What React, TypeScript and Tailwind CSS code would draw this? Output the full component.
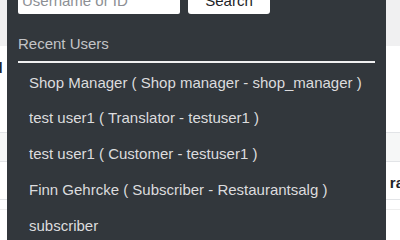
export default function App() {
  const users = [
    "Shop Manager ( Shop manager - shop_manager )",
    "test user1 ( Translator - testuser1 )",
    "test user1 ( Customer - testuser1 )",
    "Finn Gehrcke ( Subscriber - Restaurantsalg )",
    "subscriber",
  ];
  return (
    <div
      className="relative w-[400px] h-[240px] overflow-hidden bg-white"
      style={{ fontFamily: '"Liberation Sans", Arial, sans-serif' }}
    >
      {/* background page */}
      <div className="flex flex-col">
        <div className="h-[46px] bg-[#f0f0f1]" />
        <div className="h-[86px] bg-white relative">
          <span className="absolute left-[-6px] top-[12px] text-[14px] font-bold text-[#1d2327]">d</span>
        </div>
        <div className="h-[30px] bg-[#f6f7f7] border-t border-b border-[#e2e4e7]" />
        <div className="h-[38px] bg-white border-b border-[#e2e4e7] relative">
          <span className="absolute right-[-4px] top-[10px] text-[15px] font-bold text-[#1d2327]">ra</span>
        </div>
        <div className="h-[10px] border-b border-[#eeeeee]" />
      </div>

      {/* dropdown panel */}
      <div className="absolute left-[7px] top-[-20px] w-[379px] h-[270px] bg-[#32373c] px-[11px]">
        <div className="flex gap-[8px] pt-[4px]">
          <div className="w-[162px] h-[30px] bg-white rounded-[2px] flex items-end px-[4px] pb-[4px]">
            <span className="text-[15px] leading-[18px] text-[#8c8f94]">Username or ID</span>
          </div>
          <div className="w-[82px] h-[30px] bg-white rounded-[3px] flex items-end justify-center pb-[4px]">
            <span className="text-[15px] leading-[18px] text-[#1d2327]">Search</span>
          </div>
        </div>
        <div className="mt-[18px] text-[15px] leading-[20px] text-[#c3c4c7] pt-[2px]">Recent Users</div>
        <div className="mt-[7px] h-[2px] bg-[#f0f0f1] w-[357px]" />
        <div className="flex flex-col pl-[11px] pt-[2px]">
          {users.map((u) => (
            <div key={u} className="h-[35.75px] flex items-center text-[15px] text-[#dcdcde] whitespace-nowrap">
              {u}
            </div>
          ))}
        </div>
      </div>
    </div>
  );
}
